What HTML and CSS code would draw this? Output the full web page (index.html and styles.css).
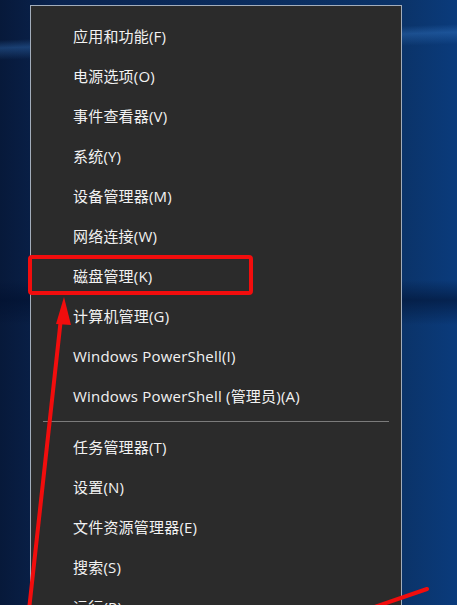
FILE: index.html
```html
<!DOCTYPE html>
<html lang="zh-CN">
<head>
  <meta charset="UTF-8">
  <meta name="viewport" content="width=device-width, initial-scale=1.0">
  <title>Win+X 菜单</title>
  <link rel="stylesheet" href="styles.css">
</head>
<body>
  <div class="desktop">
    <div class="menu">
      <ul class="group">
        <li>应用和功能(F)</li>
        <li>电源选项(O)</li>
        <li>事件查看器(V)</li>
        <li>系统(Y)</li>
        <li>设备管理器(M)</li>
        <li>网络连接(W)</li>
        <li>磁盘管理(K)</li>
        <li>计算机管理(G)</li>
        <li>Windows PowerShell(I)</li>
        <li>Windows PowerShell (管理员)(A)</li>
      </ul>
      <div class="sep"></div>
      <ul class="group">
        <li>任务管理器(T)</li>
        <li>设置(N)</li>
        <li>文件资源管理器(E)</li>
        <li>搜索(S)</li>
        <li>运行(R)</li>
      </ul>
    </div>

    <!-- red annotations drawn over the screenshot -->
    <svg class="marks" width="457" height="605" viewBox="0 0 457 605">
      <rect x="30" y="257" width="221" height="36" rx="2" fill="none" stroke="#f20d0d" stroke-width="4"/>
      <line x1="29" y1="610" x2="61" y2="318" stroke="#f20d0d" stroke-width="4" stroke-linecap="round"/>
      <polygon points="64,297 56,324 71,325" fill="#f20d0d"/>
      <line x1="360" y1="612" x2="427" y2="589" stroke="#f20d0d" stroke-width="4" stroke-linecap="round"/>
    </svg>
  </div>
</body>
</html>
```

FILE: styles.css
```css
body {
  margin: 0;
  font-family: "Segoe UI", "Open Sans", "Noto Sans CJK SC", sans-serif;
}

.desktop {
  position: relative;
  width: 457px;
  height: 605px;
  overflow: hidden;
  padding: 5px 0 0 30px;
  box-sizing: border-box;
  background:
    linear-gradient(178deg, transparent 0, transparent 40px, rgba(60,130,210,0.35) 48px, transparent 60px),
    linear-gradient(180deg, transparent 0, transparent 280px, rgba(0,15,45,0.55) 300px, transparent 325px),
    linear-gradient(90deg, #07193a 0, #0a2450 60px, #0b3368 400px, #0a3b7c 457px);
}

.menu {
  width: 370px;
  height: 640px;
  background: #2b2b2b;
  border: 1px solid #a3adbb;
  padding-top: 10px;
}

.group {
  list-style: none;
  margin: 0;
  padding: 0;
}

.group li {
  height: 40px;
  line-height: 40px;
  padding-left: 42px;
  color: #f2f2f2;
  font-size: 15px;
  letter-spacing: 0.2px;
}

.sep {
  height: 1px;
  background: #7b7b7b;
  margin: 5px 12px 5px 12px;
}

.marks {
  position: absolute;
  left: 0;
  top: 0;
}
```
